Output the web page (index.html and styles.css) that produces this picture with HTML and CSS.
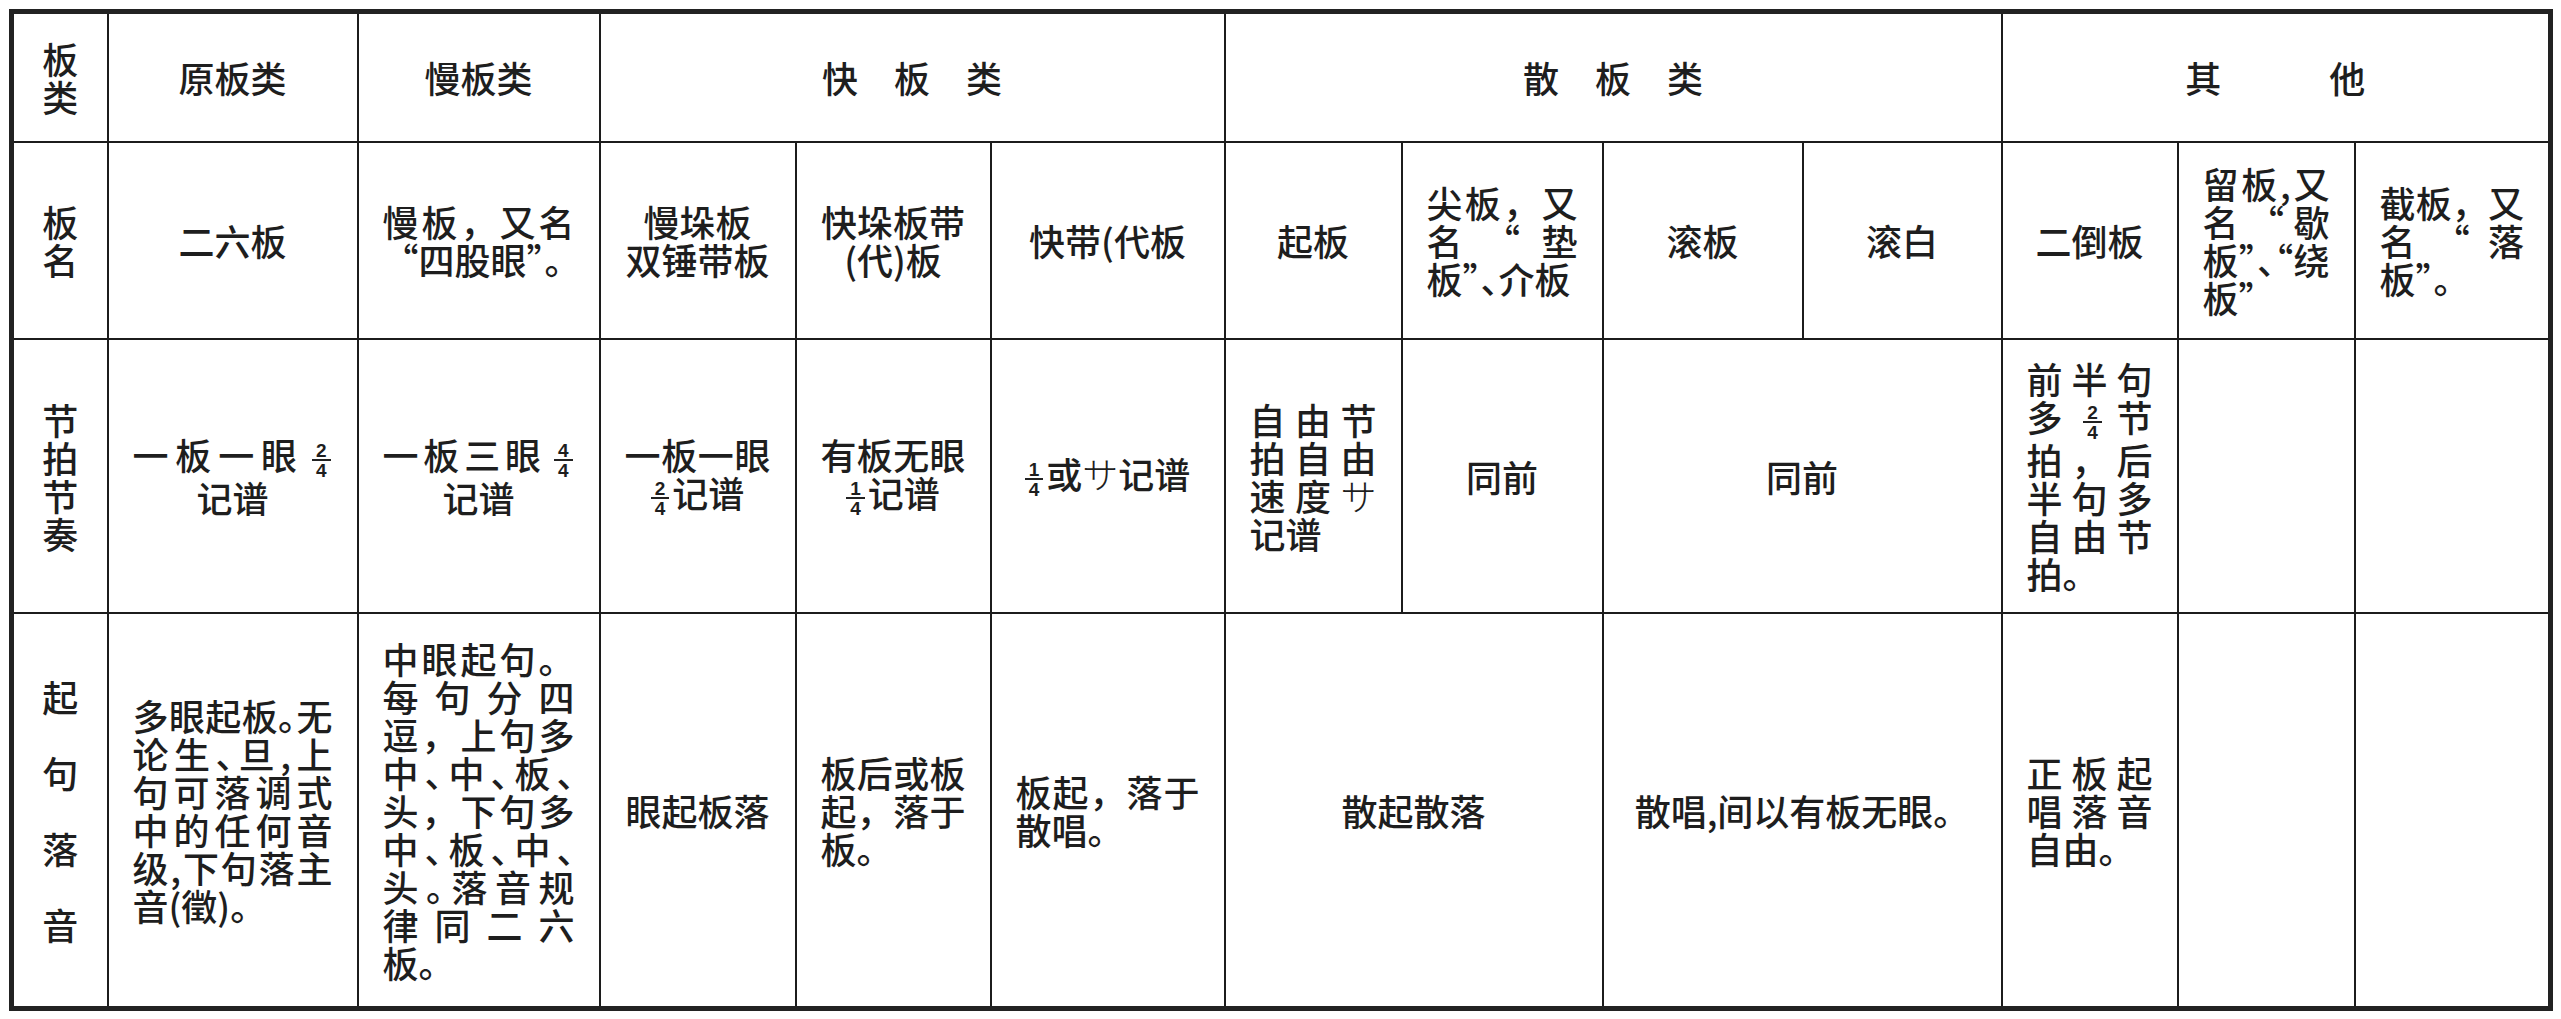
FILE: index.html
```html
<!DOCTYPE html>
<html lang="zh-CN">
<head>
<meta charset="utf-8">
<title>板类表</title>
<link rel="stylesheet" href="styles.css">
</head>
<body>
<table class="tbl">
  <colgroup>
    <col class="w0"><col class="w1"><col class="w2"><col class="w3"><col class="w4"><col class="w5"><col class="w6"><col class="w7"><col class="w8"><col class="w9"><col class="w10"><col class="w11"><col class="w12">
  </colgroup>
  <tr class="r1">
    <td class="side">板类</td>
    <td>原板类</td>
    <td>慢板类</td>
    <td colspan="3">快　板　类</td>
    <td colspan="4">散　板　类</td>
    <td colspan="3">其　　　他</td>
  </tr>
  <tr class="r2">
    <td class="side">板名</td>
    <td>二六板</td>
    <td class="txt"><span class="ln">慢板，又名</span><span class="ln end">“四股眼”<span class="h">。</span></span></td>
    <td>慢垛板<br>双锤带板</td>
    <td>快垛板带<br>(代)板</td>
    <td>快带(代板</td>
    <td>起板</td>
    <td class="txt"><span class="ln">尖板，又</span><span class="ln">名“垫</span><span class="ln end">板”<span class="h">、</span>介板</span></td>
    <td>滚板</td>
    <td>滚白</td>
    <td>二倒板</td>
    <td class="txt"><span class="ln">留板,又</span><span class="ln">名“歇</span><span class="ln">板<span class="h">”、“</span>绕</span><span class="ln end">板”</span></td>
    <td class="txt"><span class="ln">截板，又</span><span class="ln">名“落</span><span class="ln end">板”<span class="h">。</span></span></td>
  </tr>
  <tr class="r3">
    <td class="side">节拍节奏</td>
    <td class="txt"><span class="ln">一板一眼<span class="fr"><span class="nu">2</span><span class="de">4</span></span></span><span class="ln mid">记谱</span></td>
    <td class="txt"><span class="ln">一板三眼<span class="fr"><span class="nu">4</span><span class="de">4</span></span></span><span class="ln mid">记谱</span></td>
    <td class="txt"><span class="ln">一板一眼</span><span class="ln mid"><span class="fr lead"><span class="nu">2</span><span class="de">4</span></span>记谱</span></td>
    <td class="txt"><span class="ln">有板无眼</span><span class="ln mid"><span class="fr lead"><span class="nu">1</span><span class="de">4</span></span>记谱</span></td>
    <td><span class="fr lead"><span class="nu">1</span><span class="de">4</span></span>或<span class="sa">サ</span>记谱</td>
    <td class="txt"><span class="ln">自由节</span><span class="ln">拍自由</span><span class="ln">速度<span class="sa">サ</span></span><span class="ln end">记谱</span></td>
    <td>同前</td>
    <td colspan="2">同前</td>
    <td class="txt"><span class="ln">前半句</span><span class="ln">多<span class="fr"><span class="nu">2</span><span class="de">4</span></span>节</span><span class="ln">拍，后</span><span class="ln">半句多</span><span class="ln">自由节</span><span class="ln end">拍。</span></td>
    <td></td>
    <td></td>
  </tr>
  <tr class="r4">
    <td class="side sparse">起句落音</td>
    <td class="txt"><span class="ln">多眼起板<span class="h">。</span>无</span><span class="ln">论生<span class="h">、</span>旦,上</span><span class="ln">句可落调式</span><span class="ln">中的任何音</span><span class="ln">级,下句落主</span><span class="ln end">音(徵)<span class="h">。</span></span></td>
    <td class="txt"><span class="ln">中眼起句。</span><span class="ln">每句分四</span><span class="ln">逗，上句多</span><span class="ln">中<span class="h">、</span>中<span class="h">、</span>板<span class="h">、</span></span><span class="ln">头，下句多</span><span class="ln">中<span class="h">、</span>板<span class="h">、</span>中<span class="h">、</span></span><span class="ln">头<span class="h">。</span>落音规</span><span class="ln">律同二六</span><span class="ln end">板。</span></td>
    <td>眼起板落</td>
    <td class="txt"><span class="ln">板后或板</span><span class="ln">起，落于</span><span class="ln end">板。</span></td>
    <td class="txt"><span class="ln">板起，落于</span><span class="ln end">散唱。</span></td>
    <td colspan="2">散起散落</td>
    <td colspan="2">散唱,间以有板无眼。</td>
    <td class="txt"><span class="ln">正板起</span><span class="ln">唱落音</span><span class="ln end">自由。</span></td>
    <td></td>
    <td></td>
  </tr>
</table>
</body>
</html>
```
FILE: styles.css
```css
html, body {
  background: #ffffff;
}
body {
  margin: 9px 0 0 9px;
}
.tbl {
  border-collapse: collapse;
  table-layout: fixed;
  width: 2544px;
  border: 5px solid #222222;
  font-family: "Noto Sans CJK SC", "Noto Sans CJK TC", sans-serif;
  font-size: 36px;
  font-weight: 500;
  line-height: 38px;
  color: #1e1e1e;
}
.w0 { width: 96px; }
.w1 { width: 250px; }
.w2 { width: 242px; }
.w3 { width: 196px; }
.w4 { width: 195px; }
.w5 { width: 234px; }
.w6 { width: 177px; }
.w7 { width: 201px; }
.w8 { width: 200px; }
.w9 { width: 199px; }
.w10 { width: 176px; }
.w11 { width: 177px; }
.w12 { width: 196px; }

.tbl td {
  border: 2px solid #1c1c1c;
  padding: 0 24px;
  vertical-align: middle;
  text-align: center;
}
.r1 { height: 130px; }
.r2 { height: 197px; }
.r3 { height: 274px; }
.r4 { height: 396px; }

.tbl td.side {
  padding: 0 26px;
}
.tbl td.sparse {
  line-height: 76px;
}
.tbl td.txt {
  text-align: left;
}
.ln {
  display: block;
  text-align: justify;
  text-align-last: justify;
}
.ln.end {
  text-align-last: left;
}
.ln.mid {
  text-align-last: center;
}
.h {
  font-feature-settings: "halt";
}
.sa {
  font-weight: 300;
}
.fr {
  display: inline-flex;
  flex-direction: column;
  align-items: center;
  vertical-align: middle;
  margin: 0 2px 0 8px;
  font-family: "Liberation Sans", sans-serif;
  font-weight: 700;
  font-size: 19px;
  line-height: 15px;
}
.fr.lead {
  margin: 0 3px 0 0;
}
.fr .nu {
  padding: 0 4px 1px;
  border-bottom: 2px solid #222222;
}
.fr .de {
  padding-top: 2px;
}
```
